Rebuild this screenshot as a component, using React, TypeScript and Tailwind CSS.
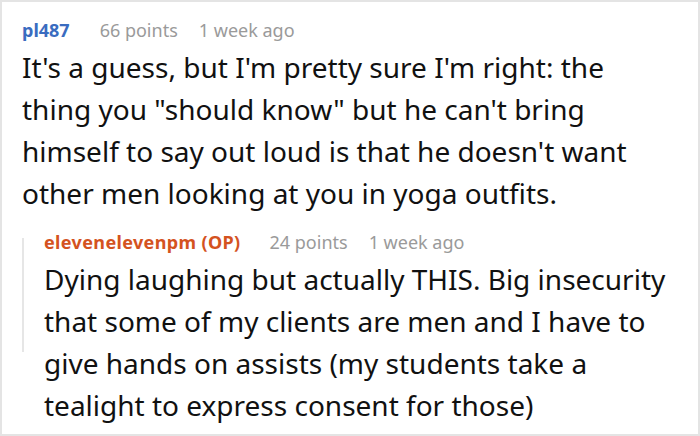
export default function App() {
  return (
    <div
      className="w-[700px] h-[436px] border-2 border-[#e4e4e4] bg-white overflow-hidden"
      style={{ fontFamily: '"Noto Sans", "Open Sans", sans-serif' }}
    >
      <div className="pl-[20px] pt-[14px]">
        <div className="flex items-center text-[18px] leading-[28px]">
          <span className="font-bold text-[#3a6cc0] mr-[30px]">pl487</span>
          <span className="text-[#9a9a9a] mr-[21px]">66 points</span>
          <span className="text-[#9a9a9a]">1 week ago</span>
        </div>
        {/* line breaks kept as in the original so the wrap matches */}
        <p className="text-[#111] text-[28px] leading-[42px] mt-[2px] whitespace-nowrap">
          It's a guess, but I'm pretty sure I'm right: the
          <br />
          thing you "should know" but he can't bring
          <br />
          himself to say out loud is that he doesn't want
          <br />
          other men looking at you in yoga outfits.
        </p>
        <div className="flex mt-[14px]">
          <div className="w-[2px] h-[114px] mt-[10px] bg-[#e6e6e6] shrink-0" />
          <div className="pl-[20px]">
            <div className="flex items-center text-[18px] leading-[28px]">
              <span className="font-bold text-[#d4531f] tracking-[0.02em] mr-[29px]">elevenelevenpm (OP)</span>
              <span className="text-[#9a9a9a] mr-[21px]">24 points</span>
              <span className="text-[#9a9a9a]">1 week ago</span>
            </div>
            <p className="text-[#111] text-[28px] leading-[42px] mt-[2px] whitespace-nowrap">
              Dying laughing but actually THIS. Big insecurity
              <br />
              that some of my clients are men and I have to
              <br />
              give hands on assists (my students take a
              <br />
              tealight to express consent for those)
            </p>
          </div>
        </div>
      </div>
    </div>
  )
}
